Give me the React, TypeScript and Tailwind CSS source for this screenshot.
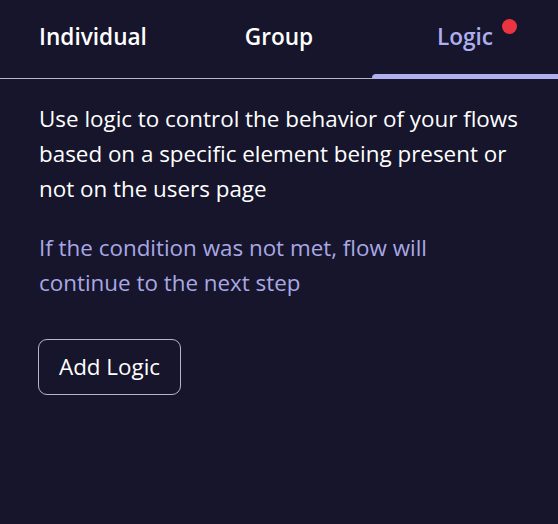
export default function App() {
  const tabs = ["Individual", "Group", "Logic"];
  const active = 2;

  return (
    <div
      className="h-[524px] w-[558px] bg-[#16152b] text-white"
      style={{ fontFamily: '"Open Sans", "Noto Sans", sans-serif' }}
    >
      <div className="relative grid grid-cols-3 border-b border-[#b5b5c4]">
        {tabs.map((tab, i) => (
          <div
            key={tab}
            className={`relative flex h-[78px] items-center justify-center pb-[4px] text-[22.6px] font-semibold ${
              i === active ? "text-[#aeaeee]" : "text-white"
            }`}
          >
            <span className="relative">
              {tab}
              {i === active && (
                <span className="absolute -right-[24px] -top-[1px] h-[15px] w-[15px] rounded-full bg-[#ea3440]" />
              )}
            </span>
            {i === active && (
              <span className="absolute -bottom-[1px] left-0 right-0 h-[5px] rounded-tl-[4px] bg-[#b0b0ee]" />
            )}
          </div>
        ))}
      </div>

      <div className="w-[521px] pl-[39px] pt-[22px]">
        <p className="text-[22.4px] leading-[35px] text-white">
          Use logic to control the behavior of your flows based on a specific
          element being present or not on the users page
        </p>
        <p className="mt-[24px] text-[22.4px] leading-[35px] text-[#a9a8e4]">
          If the condition was not met, flow will continue to the next step
        </p>
        <button className="-ml-[1px] mt-[39px] h-[56px] rounded-[9px] border border-[#b5b5c4] px-[20px] text-[22.4px] text-white">
          Add Logic
        </button>
      </div>
    </div>
  );
}
